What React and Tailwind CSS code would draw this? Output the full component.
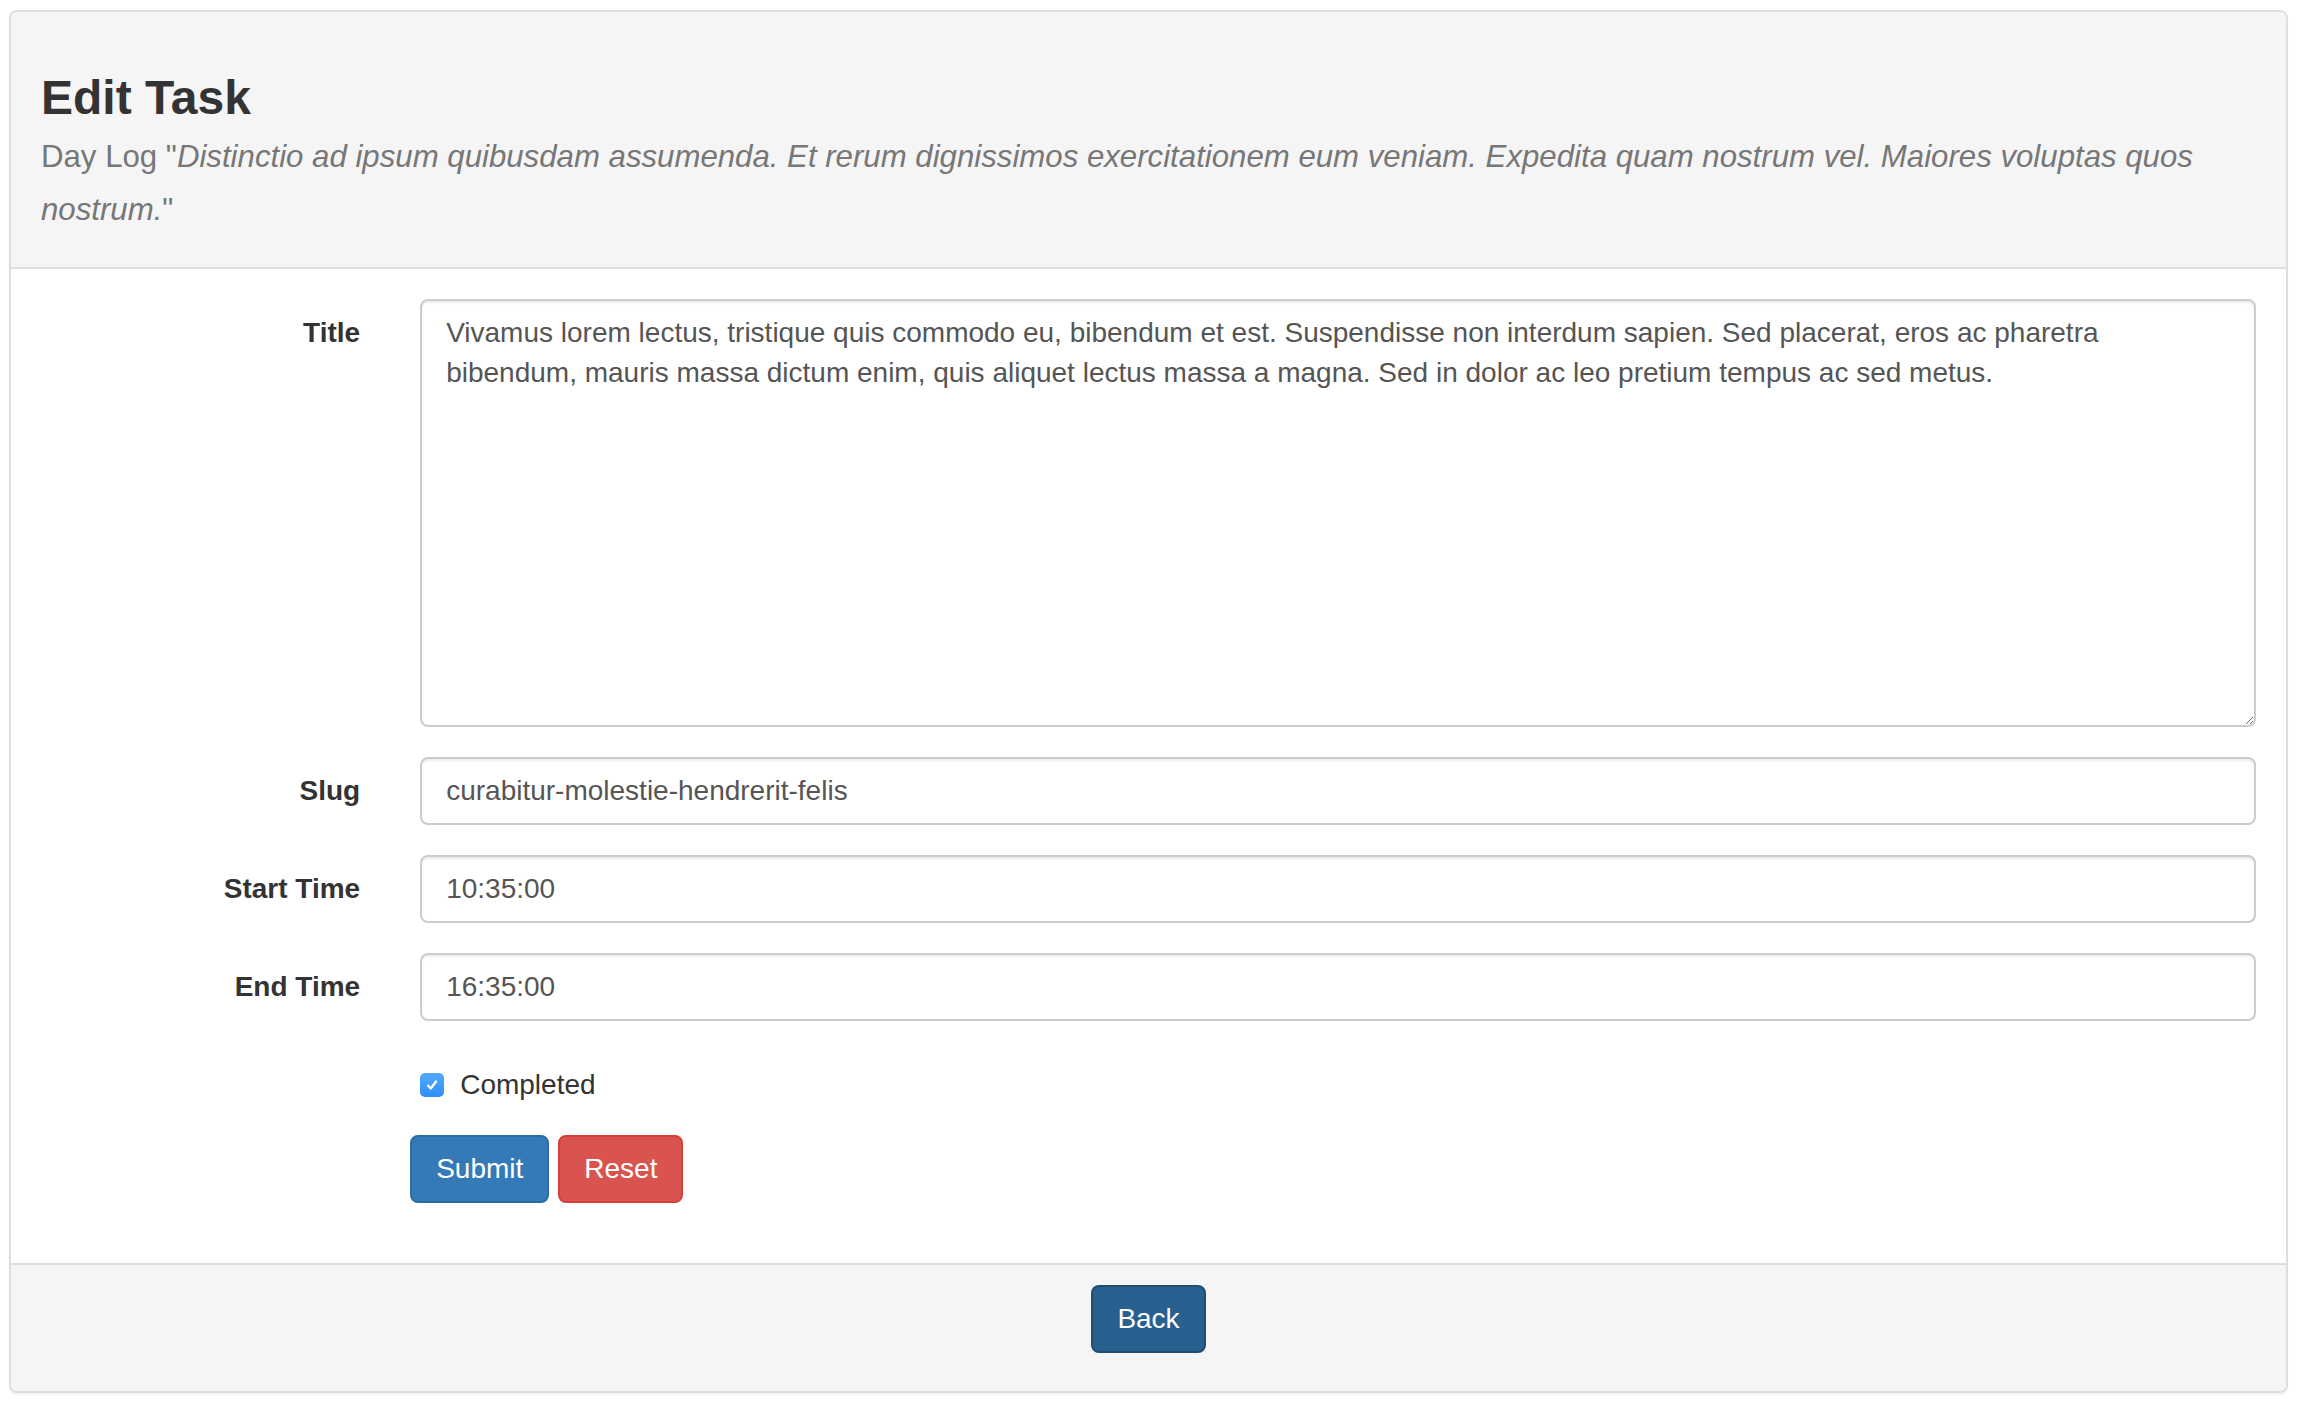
import React from "react";

const fields = [
  { label: "Slug", value: "curabitur-molestie-hendrerit-felis" },
  { label: "Start Time", value: "10:35:00" },
  { label: "End Time", value: "16:35:00" },
];

export default function App() {
  return (
    <div className="bg-white min-h-screen px-[9px] pt-[10px] font-['Liberation_Sans',Arial,sans-serif] text-[28px] leading-[40px] text-[#333]">
      <div className="rounded-[8px] border-2 border-[#ddd] shadow-[0_2px_2px_rgba(0,0,0,0.05)] bg-white">
        {/* heading */}
        <div className="bg-[#f5f5f5] border-b-2 border-[#ddd] rounded-t-[6px] px-[30px] pt-[20px] pb-[17px]">
          <h3 className="mt-[40px] mb-[20px] text-[48px] leading-[52.8px] font-bold text-[#333]">
            Edit Task
            <br />
            <small className="text-[31.2px] leading-none font-normal text-[#777]">
              Day Log "
              <em>
                Distinctio ad ipsum quibusdam assumenda. Et rerum dignissimos exercitationem eum veniam. Expedita quam
                nostrum vel. Maiores voluptas quos nostrum.
              </em>
              "
            </small>
          </h3>
        </div>

        {/* body */}
        <div className="px-[30px] py-[30px]">
          <form className="-mx-[30px]" onSubmit={(e) => e.preventDefault()}>
            <div className="flex mb-[30px]">
              <label className="w-1/6 px-[30px] pt-[14px] text-right font-bold">Title</label>
              <div className="w-5/6 px-[30px]">
                <textarea
                  className="block w-full h-[428px] px-[24px] py-[12px] border-2 border-[#ccc] rounded-[8px] text-[#555] text-[28px] leading-[40px] shadow-[inset_0_2px_2px_rgba(0,0,0,0.075)] outline-none resize-y"
                  defaultValue="Vivamus lorem lectus, tristique quis commodo eu, bibendum et est. Suspendisse non interdum sapien. Sed placerat, eros ac pharetra bibendum, mauris massa dictum enim, quis aliquet lectus massa a magna. Sed in dolor ac leo pretium tempus ac sed metus."
                />
              </div>
            </div>

            {fields.map((f) => (
              <div key={f.label} className="flex mb-[30px]">
                <label className="w-1/6 px-[30px] pt-[14px] text-right font-bold">{f.label}</label>
                <div className="w-5/6 px-[30px]">
                  <input
                    type="text"
                    className="block w-full h-[68px] px-[24px] py-[12px] border-2 border-[#ccc] rounded-[8px] text-[#555] text-[28px] leading-[40px] shadow-[inset_0_2px_2px_rgba(0,0,0,0.075)] outline-none"
                    defaultValue={f.value}
                  />
                </div>
              </div>
            ))}

            <div className="flex mb-[30px]">
              <div className="ml-[16.6667%] w-5/6 px-[30px] pt-[14px]">
                <label className="flex items-center gap-[16px] font-normal">
                  <span className="flex items-center justify-center w-[24px] h-[24px] rounded-[5px] bg-gradient-to-b from-[#52aafe] to-[#2f8df6]">
                    <svg width="16" height="16" viewBox="0 0 16 16" fill="none">
                      <path d="M4 8.5 L6.8 11.5 L12 4.5" stroke="white" strokeWidth="2.2" strokeLinecap="round" strokeLinejoin="round" />
                    </svg>
                  </span>
                  Completed
                </label>
              </div>
            </div>

            <div className="flex mb-[30px]">
              <div className="ml-[16.6667%] w-5/6 pl-[20px] pr-[30px] flex gap-[9px]">
                <button
                  type="submit"
                  className="px-[24px] py-[12px] border-2 border-[#2e6da4] bg-[#337ab7] rounded-[8px] text-white text-[28px] leading-[40px]"
                >
                  Submit
                </button>
                <button
                  type="reset"
                  className="px-[24px] py-[12px] border-2 border-[#d43f3a] bg-[#d9534f] rounded-[8px] text-white text-[28px] leading-[40px]"
                >
                  Reset
                </button>
              </div>
            </div>
          </form>
        </div>

        {/* footer */}
        <div className="bg-[#f5f5f5] border-t-2 border-[#ddd] rounded-b-[6px] px-[30px] pt-[20px] pb-[38px] flex justify-center">
          <button className="px-[24px] py-[12px] border-2 border-[#204d74] bg-[#286090] rounded-[8px] text-white text-[28px] leading-[40px]">
            Back
          </button>
        </div>
      </div>
    </div>
  );
}
